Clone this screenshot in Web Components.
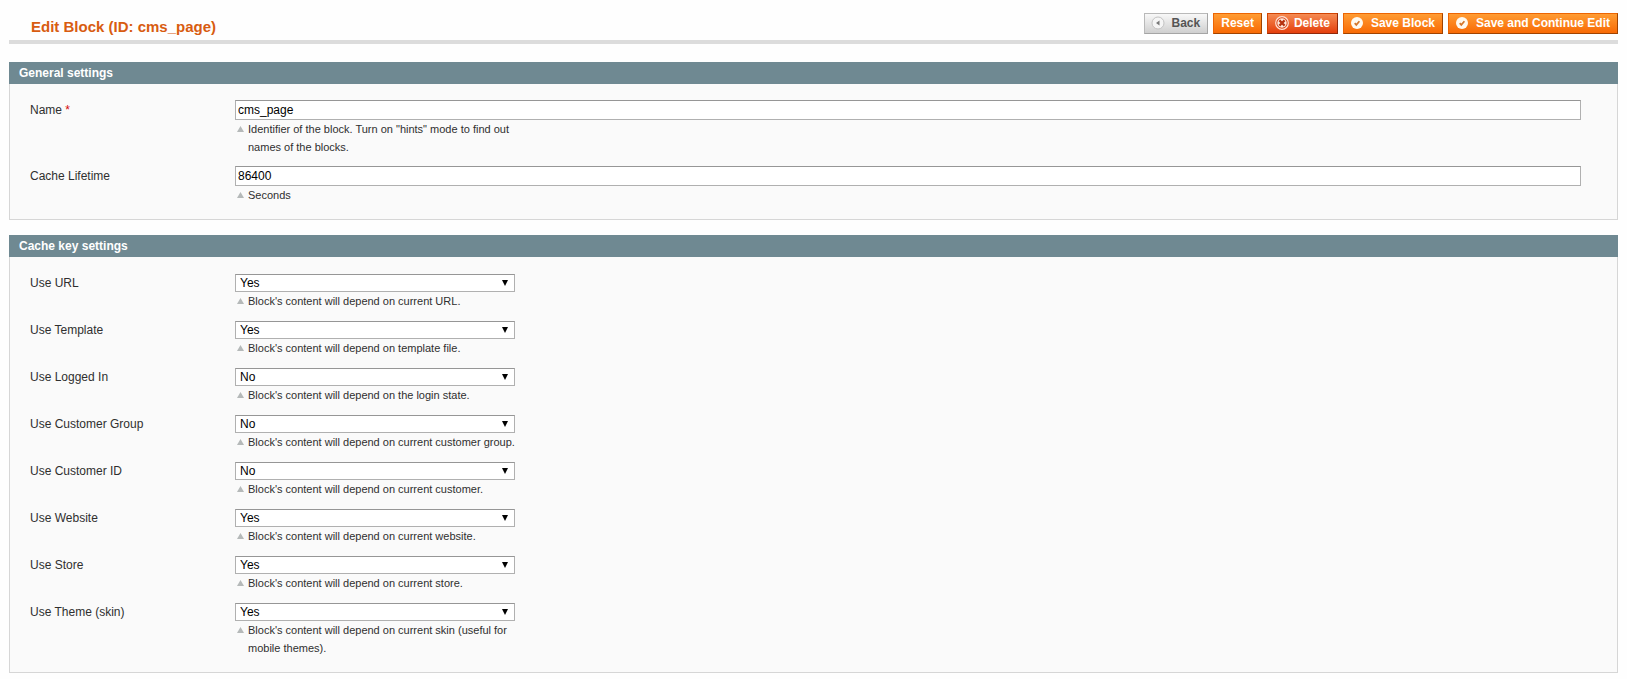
<!DOCTYPE html>
<html lang="en">
<head>
<meta charset="utf-8">
<title>Edit Block (ID: cms_page)</title>
<style>
  body { margin: 0; background: #fefefe; color: #2f2f2f; font: 12px/20px "Liberation Sans", Arial, sans-serif; }
</style>
</head>
<body>
<block-edit-page></block-edit-page>

<template id="page-template">
  <style>
    :host { display: block; padding: 9px 9px 5px; }
    form { display: grid; gap: 15px; margin: 0; }
  </style>
  <page-header heading="Edit Block (ID: cms_page)">
    <action-button kind="back" icon="back">Back</action-button>
    <action-button>Reset</action-button>
    <action-button kind="delete" icon="delete">Delete</action-button>
    <action-button icon="save">Save Block</action-button>
    <action-button icon="save">Save and Continue Edit</action-button>
  </page-header>
  <form>
    <settings-panel heading="General settings">
      <form-field label="Name" value="cms_page" required hint="Identifier of the block. Turn on &quot;hints&quot; mode to find out names of the blocks."></form-field>
      <form-field label="Cache Lifetime" value="86400" hint="Seconds"></form-field>
    </settings-panel>
    <settings-panel heading="Cache key settings">
      <form-field type="select" label="Use URL" value="Yes" hint="Block's content will depend on current URL."></form-field>
      <form-field type="select" label="Use Template" value="Yes" hint="Block's content will depend on template file."></form-field>
      <form-field type="select" label="Use Logged In" value="No" hint="Block's content will depend on the login state."></form-field>
      <form-field type="select" label="Use Customer Group" value="No" hint="Block's content will depend on current customer group."></form-field>
      <form-field type="select" label="Use Customer ID" value="No" hint="Block's content will depend on current customer."></form-field>
      <form-field type="select" label="Use Website" value="Yes" hint="Block's content will depend on current website."></form-field>
      <form-field type="select" label="Use Store" value="Yes" hint="Block's content will depend on current store."></form-field>
      <form-field type="select" label="Use Theme (skin)" value="Yes" hint="Block's content will depend on current skin (useful for mobile themes)."></form-field>
    </settings-panel>
  </form>
</template>

<template id="header-template">
  <style>
    :host { display: block; margin-bottom: 18px; }
    header { display: flex; flex-wrap: wrap; justify-content: space-between; border-bottom: 4px solid #dcdcdc; }
    h1 { margin: 0; padding: 8px 0 3px 22px; font-size: 15px; line-height: 20px; color: #d85c10; }
    .actions { display: flex; flex-wrap: wrap; gap: 5px; padding: 4px 0 6px; }
  </style>
  <header><h1></h1><div class="actions"><slot></slot></div></header>
</template>

<template id="button-template">
  <style>
    :host { display: block; --top: #ff9c33; --bottom: #f86a05; --edge: #ed6502; --edge-low: #a04300; --ink: #fff; }
    :host([kind="back"]) { --top: #f8f8f8; --bottom: #cfcfcf; --edge: #b9b9b9; --edge-low: #a5a5a5; --ink: #555; }
    :host([kind="delete"]) { --top: #f58b52; --bottom: #e43e0c; --edge: #d24403; --edge-low: #90280a; }
    button {
      display: flex; align-items: center; box-sizing: border-box; height: 21px; margin: 0; padding: 0 7px 1px;
      border: 1px solid var(--edge); border-right-color: var(--edge-low); border-bottom-color: var(--edge-low);
      background: linear-gradient(var(--top), var(--bottom));
      color: var(--ink); font: bold 12px/18px "Liberation Sans", Arial, sans-serif; white-space: nowrap; cursor: pointer;
    }
    svg { flex: none; width: 14px; height: 14px; margin: 0 7px 0 -1px; }
    :host([kind="delete"]) svg { margin: 0 5px 0 0; }
  </style>
  <button type="button"><slot></slot></button>
</template>

<template id="panel-template">
  <style>
    :host { display: block; }
    h2 { margin: 0; padding: 0 10px; background: #6f8992; color: #fff; font-size: 12px; line-height: 22px; }
    .body { display: grid; gap: 10px; padding: 16px 36px 15px 20px; border: 1px solid #d6d6d6; border-top: 0; background: #fafafa; }
  </style>
  <section><h2></h2><div class="body"><slot></slot></div></section>
</template>

<template id="field-template">
  <style>
    :host { display: grid; grid-template-columns: 205px minmax(0, 1fr); }
    .star { color: #d40707; }
    input, select {
      display: block; box-sizing: border-box; margin: 0; border: 1px solid #b0b0b0; border-top-color: #969696; border-radius: 0;
      background: #fff; color: #000; font: 12px/16px "Liberation Sans", Arial, sans-serif;
    }
    input { width: 100%; height: 20px; padding: 0 2px; }
    .choice { display: grid; width: 280px; max-width: 100%; margin-top: 1px; align-items: center; }
    .choice > * { grid-area: 1 / 1; }
    select { appearance: none; width: 100%; height: 18px; padding: 0 20px 0 4px; }
    .choice svg { justify-self: end; width: 6px; height: 6px; margin-right: 7px; pointer-events: none; }
    .hint { display: flex; gap: 4px; max-width: 280px; margin: 0; padding-left: 2px; box-sizing: border-box; font-size: 11px; line-height: 18px; }
    .hint svg { flex: none; width: 7px; height: 6px; margin-top: 6px; }
    .hint span { flex: none; width: 270px; }
  </style>
  <label for="control"></label>
  <div>
    <div class="control"></div>
    <p class="hint" id="hint"><svg viewBox="0 0 7 6" aria-hidden="true"><path d="M3.5 0 7 6H0Z" fill="#b5b9b9"/></svg><span></span></p>
  </div>
</template>

<script>
  const ICONS = {
    back: '<circle cx="7" cy="7" r="6" fill="#f5f5f5" stroke="#c3c3c3"/><path d="M8.5 4.5v5L5 7Z" fill="#777"/>',
    delete: '<circle cx="7" cy="7" r="6.3" fill="#d9481d" stroke="#ffe3d5" stroke-width="1.2"/><circle cx="7" cy="7" r="4.7" fill="#ffe9dc"/><path d="m4.4 4.4 5.2 5.2m0-5.2L4.4 9.6" stroke="#b63310" stroke-width="2.2"/>',
    save: '<circle cx="7" cy="7" r="6" fill="#fffaf0"/><path d="m4.7 7.2 1.6 1.7 3.1-3.6" fill="none" stroke="#d5772a" stroke-width="1.7"/>'
  };

  class BaseElement extends HTMLElement {
    mount(id) {
      const root = this.attachShadow({ mode: 'open' });
      root.append(document.getElementById(id).content.cloneNode(true));
      return root;
    }
  }

  customElements.define('action-button', class extends BaseElement {
    connectedCallback() {
      if (this.shadowRoot) return;
      const button = this.mount('button-template').querySelector('button');
      const icon = ICONS[this.getAttribute('icon')];
      if (icon) button.insertAdjacentHTML('afterbegin', `<svg viewBox="0 0 14 14" aria-hidden="true">${icon}</svg>`);
    }
  });

  customElements.define('page-header', class extends BaseElement {
    connectedCallback() {
      if (this.shadowRoot) return;
      this.mount('header-template').querySelector('h1').textContent = this.getAttribute('heading');
    }
  });

  customElements.define('settings-panel', class extends BaseElement {
    connectedCallback() {
      if (this.shadowRoot) return;
      this.mount('panel-template').querySelector('h2').textContent = this.getAttribute('heading');
    }
  });

  customElements.define('form-field', class extends BaseElement {
    connectedCallback() {
      if (this.shadowRoot) return;
      const root = this.mount('field-template');
      const label = root.querySelector('label');
      const holder = root.querySelector('.control');
      const value = this.getAttribute('value');
      label.textContent = this.getAttribute('label');
      if (this.hasAttribute('required')) label.insertAdjacentHTML('beforeend', ' <span class="star">*</span>');
      root.querySelector('.hint span').textContent = this.getAttribute('hint');
      let control;
      if (this.getAttribute('type') === 'select') {
        holder.classList.add('choice');
        control = document.createElement('select');
        for (const text of ['Yes', 'No']) control.add(new Option(text, text, text === value, text === value));
        holder.append(control);
        holder.insertAdjacentHTML('beforeend', '<svg viewBox="0 0 6 6" aria-hidden="true"><path d="M0 0h6L3 6Z"/></svg>');
      } else {
        control = document.createElement('input');
        control.type = 'text';
        control.value = value;
        control.required = this.hasAttribute('required');
        holder.append(control);
      }
      control.id = 'control';
      control.setAttribute('aria-describedby', 'hint');
    }
  });

  customElements.define('block-edit-page', class extends BaseElement {
    connectedCallback() {
      if (!this.shadowRoot) this.mount('page-template');
    }
  });
</script>
</body>
</html>
